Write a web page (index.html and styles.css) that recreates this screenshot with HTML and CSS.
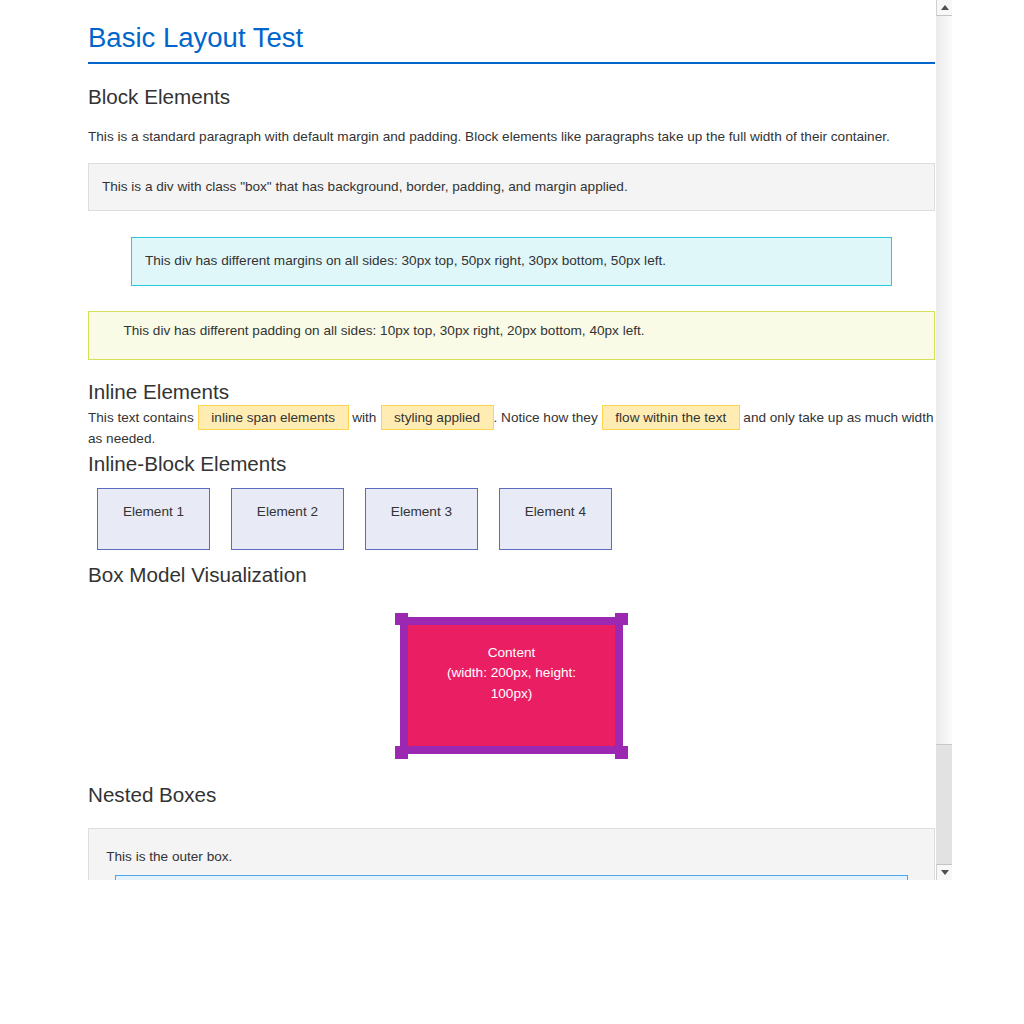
FILE: index.html
```html
<!DOCTYPE html>
<html lang="en">
<head>
<meta charset="utf-8">
<title>Basic Layout Test</title>
<link rel="stylesheet" href="styles.css">
</head>
<body>
<div class="window">
  <div class="viewport">
    <main class="page">
      <h1 class="title">Basic Layout Test</h1>

      <section class="section">
        <h2 class="section-title">Block Elements</h2>
        <p class="para">This is a standard paragraph with default margin and padding. Block elements like paragraphs take up the full width of their container.</p>
        <div class="box">This is a div with class "box" that has background, border, padding, and margin applied.</div>
        <div class="box-margin">This div has different margins on all sides: 30px top, 50px right, 30px bottom, 50px left.</div>
        <div class="box-padding">This div has different padding on all sides: 10px top, 30px right, 20px bottom, 40px left.</div>
      </section>

      <section class="section">
        <h2 class="section-title">Inline Elements</h2>
        <div class="flow-text">This text contains <span class="tag">inline span elements</span> with <span class="tag">styling applied</span>. Notice how they <span class="tag">flow within the text</span> and only take up as much width as needed.</div>
      </section>

      <section class="section">
        <h2 class="section-title">Inline-Block Elements</h2>
        <div class="chips">
          <div class="chip">Element 1</div>
          <div class="chip">Element 2</div>
          <div class="chip">Element 3</div>
          <div class="chip">Element 4</div>
        </div>
      </section>

      <section class="section">
        <h2 class="section-title">Box Model Visualization</h2>
        <div class="box-model">
          <span class="corner corner-tl"></span>
          <span class="corner corner-tr"></span>
          <span class="corner corner-bl"></span>
          <span class="corner corner-br"></span>
          Content<br>(width: 200px, height: 100px)
        </div>
      </section>

      <section class="section">
        <h2 class="section-title">Nested Boxes</h2>
        <div class="outer-box">
          <p class="outer-text">This is the outer box.</p>
          <div class="inner-box">
            <p class="inner-text">This is the inner box.</p>
          </div>
        </div>
      </section>
    </main>
  </div>
  <div class="scrollbar">
    <div class="sb-button sb-up"><span class="arrow-up"></span></div>
    <div class="sb-track"></div>
    <div class="sb-thumb"></div>
    <div class="sb-button sb-down"><span class="arrow-down"></span></div>
  </div>
</div>
</body>
</html>
```

FILE: styles.css
```css
html, body {
  margin: 0;
  padding: 0;
  background: #ffffff;
}

body {
  font-family: "Liberation Sans", Arial, sans-serif;
  font-size: 13.6px;
  line-height: 20.64px;
  color: #333333;
}

.window {
  width: 952px;
  height: 880px;
  display: flex;
  overflow: hidden;
}

.viewport {
  flex: 1;
  height: 880px;
  overflow: hidden;
}

.page {
  padding: 16.5px 1px 0 88px;
}

.title {
  margin: 0 0 18.2px;
  padding-bottom: 4.3px;
  font-size: 27.52px;
  font-weight: normal;
  line-height: 41.28px;
  color: #0066cc;
  border-bottom: 2px solid #0066cc;
}

.section-title {
  margin: 0;
  font-size: 20.64px;
  font-weight: normal;
  line-height: 30.96px;
  color: #333333;
}

.para {
  margin: 14px 0 13.76px;
}

.box {
  margin: 15.2px 0 17.2px;
  padding: 12.9px;
  background: #f4f4f4;
  border: 1px solid #dddddd;
}

.box-margin {
  margin: 25.8px 43px;
  padding: 12.9px;
  background: #e0f7fa;
  border: 1px solid #2cc8dc;
}

.box-padding {
  margin: 25.8px 0 17.2px;
  padding: 8.6px 25.8px 17.2px 34.4px;
  background: #f9fbe7;
  border: 1px solid #d4e157;
}

.flow-text {
  word-spacing: -0.05px;
}

.tag {
  margin-left: 0.5px;
  padding: 4px 12.4px;
  background: #ffecb3;
  border: 1px solid #ffd54f;
}

.chips {
  display: flex;
  gap: 3px;
}

.chip {
  width: 86px;
  height: 34.4px;
  margin: 7.6px 8.6px 9.6px;
  padding: 12.9px;
  text-align: center;
  background: #e8eaf6;
  border: 1px solid #5c6bc0;
}

.box-model {
  position: relative;
  width: 172px;
  height: 86px;
  margin: 26.8px auto 25.8px;
  padding: 17.2px;
  border: 8.6px solid #9c27b0;
  background: #e91e63;
  color: #ffffff;
  text-align: center;
}

.corner {
  position: absolute;
  width: 12.9px;
  height: 12.9px;
  background: #9c27b0;
}

.corner-tl { left: -12.9px; top: -12.9px; }
.corner-tr { right: -12.9px; top: -12.9px; }
.corner-bl { left: -12.9px; bottom: -12.9px; }
.corner-br { right: -12.9px; bottom: -12.9px; }

.outer-box {
  margin-top: 17.2px;
  padding: 18.2px 17.2px 17.2px;
  background: #f4f4f4;
  border: 1px solid #dddddd;
}

.outer-text {
  margin: 0 0 7.1px;
}

.inner-box {
  margin: 0 8.6px;
  padding: 17.2px;
  background: #e3f2fd;
  border: 1px solid #4fa8ee;
}

.inner-text {
  margin: 0;
}

/* fake classic scrollbar */
.scrollbar {
  width: 16px;
  height: 880px;
  display: flex;
  flex-direction: column;
  background: linear-gradient(90deg, #ebebeb, #fbfbfb);
}

.sb-button {
  height: 16px;
  box-sizing: border-box;
  display: flex;
  align-items: center;
  justify-content: center;
  background: #f7f7f7;
  border-left: 1px solid #d0d0d0;
}

.sb-up {
  border-bottom: 1px solid #c4c4c4;
}

.sb-down {
  border-top: 1px solid #c4c4c4;
}

.sb-track {
  flex: 1;
}

.sb-thumb {
  height: 120px;
  box-sizing: border-box;
  background: #e2e2e2;
  border-top: 1px solid #c6c6c6;
}

.arrow-up {
  width: 0;
  height: 0;
  border-left: 4.5px solid transparent;
  border-right: 4.5px solid transparent;
  border-bottom: 5px solid #505050;
}

.arrow-down {
  width: 0;
  height: 0;
  border-left: 4.5px solid transparent;
  border-right: 4.5px solid transparent;
  border-top: 5px solid #505050;
}
```
